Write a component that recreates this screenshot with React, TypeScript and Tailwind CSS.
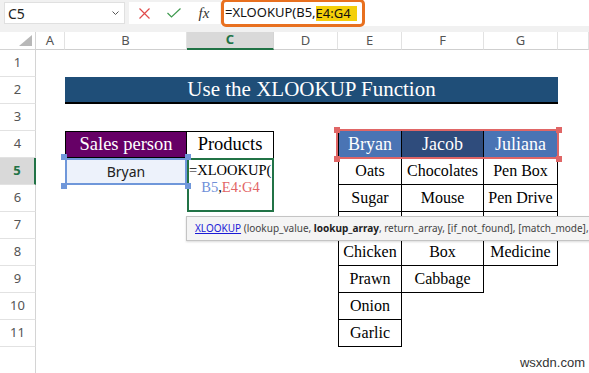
const rs = [
  "row-start-1", "row-start-2", "row-start-3", "row-start-4", "row-start-5", "row-start-6", "row-start-7",
  "row-start-8", "row-start-9", "row-start-10", "row-start-11", "row-start-12", "row-start-13",
];
const cs = ["col-start-1", "col-start-2", "col-start-3", "col-start-4", "col-start-5", "col-start-6", "col-start-7", "col-start-8", "col-start-9"];

const colHeaders = ["A", "B", "C", "D", "E", "F", "G", ""];

// rows 5..11, columns E..G (row 7 sits under the tooltip)
const products: (string | null)[][] = [
  ["Oats", "Chocolates", "Pen Box"],
  ["Sugar", "Mouse", "Pen Drive"],
  ["", "", ""],
  ["Chicken", "Box", "Medicine"],
  ["Prawn", "Cabbage", null],
  ["Onion", null, null],
  ["Garlic", null, null],
];

const serif = "font-['Liberation_Serif',serif]";

function Handles({ color }: { color: string }) {
  return (
    <>
      <div className={`absolute left-[-4px] top-[-4px] h-[6px] w-[6px] ${color}`} />
      <div className={`absolute right-[-4px] top-[-4px] h-[6px] w-[6px] ${color}`} />
      <div className={`absolute bottom-[-4px] left-[-4px] h-[6px] w-[6px] ${color}`} />
      <div className={`absolute bottom-[-4px] right-[-4px] h-[6px] w-[6px] ${color}`} />
    </>
  );
}

export default function App() {
  return (
    <div className="relative h-[373px] w-[589px] overflow-hidden bg-white font-['Noto_Sans',sans-serif] text-[#222]">
      {/* Formula bar */}
      <div className="flex h-[32px] items-start bg-[#f1f1f1]">
        <div className="ml-[4px] mt-[2px] flex h-[22px] w-[121px] items-center justify-between border border-[#e0e0e0] bg-white pl-[3px] pr-[5px] text-[14px]">
          <span>C5</span>
          <svg width="7" height="4" viewBox="0 0 7 4">
            <polyline points="0.5,0.5 3.5,3.5 6.5,0.5" fill="none" stroke="#555" strokeWidth="1" />
          </svg>
        </div>
        <div className="ml-[4px] mt-[2px] flex h-[22px] w-[91px] items-center bg-white">
          <div className="flex w-[30px] justify-center">
            <svg width="11" height="11" viewBox="0 0 11 11">
              <path d="M0.5 0.5 L10.5 10.5 M10.5 0.5 L0.5 10.5" stroke="#e04b4b" strokeWidth="1.2" />
            </svg>
          </div>
          <div className="flex w-[30px] justify-center">
            <svg width="14" height="10" viewBox="0 0 14 10">
              <polyline points="0.5,5 4.5,9 13.5,0.5" fill="none" stroke="#3f9a4f" strokeWidth="1.2" />
            </svg>
          </div>
          <div className={`flex w-[30px] justify-center text-[15px] italic text-[#333] ${serif}`}>fx</div>
        </div>
        <div className="ml-[1px] flex h-[26px] flex-1 items-start bg-white">
          <div className="mt-[-1px] flex h-[28px] w-[144px] items-center rounded-[5px] border-[3px] border-[#e8701f] pl-[1px] text-[13px] text-[#111]">
            =XLOOKUP(B5,<span className="bg-[#f4cf0a] pr-[6px] leading-[15px]">E4:G4</span>
          </div>
        </div>
      </div>

      {/* Sheet */}
      <div className="grid grid-cols-[36px_29px_122px_87px_64px_64px_82px_74px_1fr] grid-rows-[18px_repeat(12,27px)]">
        {/* corner */}
        <div className="col-start-1 row-start-1 flex items-end justify-end border-b border-r border-[#d4d4d4] bg-white pb-[3px] pr-[3px]">
          <svg width="13" height="11" viewBox="0 0 13 11">
            <polygon points="13,0 13,11 0,11" fill="#b8b8b8" />
          </svg>
        </div>
        {colHeaders.map((h, i) =>
          h === "C" ? (
            <div
              key={i}
              className={`${cs[i + 1]} row-start-1 flex items-center justify-center border-b-2 border-r border-b-[#217346] border-r-[#d4d4d4] bg-[#d9d9d9] text-[13px] font-bold text-[#217346]`}
            >
              C
            </div>
          ) : (
            <div
              key={i}
              className={`${cs[i + 1]} row-start-1 flex items-center justify-center border-b border-r border-b-[#cfcfcf] border-r-[#e2e2e2] bg-white text-[13px] text-[#555]`}
            >
              {h}
            </div>
          )
        )}

        {/* row headers */}
        {Array.from({ length: 12 }).map((_, i) =>
          i + 1 === 5 ? (
            <div
              key={i}
              className={`col-start-1 ${rs[i + 1]} flex items-center justify-center border-b border-r-2 border-b-[#e2e2e2] border-r-[#217346] bg-[#d9d9d9] text-[13px] font-bold text-[#217346]`}
            >
              5
            </div>
          ) : (
            <div
              key={i}
              className={`col-start-1 ${rs[i + 1]} flex items-center justify-center border-r border-r-[#d4d4d4] bg-white text-[13px] text-[#555] ${i < 11 ? "border-b border-b-[#e2e2e2]" : ""}`}
            >
              {i < 11 ? i + 1 : ""}
            </div>
          )
        )}

        {/* Title */}
        <div className={`col-start-3 col-span-6 row-start-3 flex items-center justify-center border-b-2 border-black bg-[#1f4e78] text-[21px] text-white ${serif}`}>
          Use the XLOOKUP Function
        </div>

        {/* Left table */}
        <div className={`col-start-3 row-start-5 flex items-center justify-center border border-black bg-[#660066] text-[18.5px] text-white ${serif}`}>
          Sales person
        </div>
        <div className={`col-start-4 row-start-5 flex items-center justify-center border-r border-t border-black bg-white text-[18.5px] text-black ${serif}`}>
          Products
        </div>
        <div className="relative col-start-3 row-start-6 flex items-center justify-center bg-[#edf2fb] text-[14px] text-[#222]">
          Bryan
          <div className="absolute inset-0 border-2 border-[#6f97da]" />
          <Handles color="bg-[#6f97da]" />
        </div>
        <div className={`col-start-4 row-start-6 row-span-2 border-2 border-[#217346] bg-white text-[14.5px] leading-[17px] ${serif}`}>
          <div className="whitespace-nowrap pt-[2px] text-black">=XLOOKUP(</div>
          <div className="text-center">
            <span className="text-[#6f8fd8]">B5</span>
            <span className="text-black">,</span>
            <span className="text-[#e26565]">E4:G4</span>
          </div>
        </div>

        {/* Right table header */}
        <div className={`relative col-start-6 col-span-3 row-start-5 grid grid-cols-subgrid text-[18px] text-white ${serif}`}>
          <div className="flex items-center justify-center border-l border-r border-black bg-[#4a74b4]">Bryan</div>
          <div className="flex items-center justify-center border-r border-black bg-[#2f4c7c]">Jacob</div>
          <div className="flex items-center justify-center border-r border-black bg-[#4a74b4]">Juliana</div>
          <div className="absolute bottom-[-1px] left-[-2px] right-[-1px] top-[-2px] border-2 border-[#e06666]" />
          <Handles color="bg-[#e06666]" />
        </div>

        {/* Right table body */}
        {products.map((row, r) =>
          row.map((item, c) =>
            item === null ? null : (
              <div
                key={`${r}-${c}`}
                className={`${cs[c + 5]} ${rs[r + 5]} flex items-center justify-center border-b border-r border-black bg-white text-[16px] text-black ${serif} ${c === 0 ? "border-l" : ""}`}
              >
                {item}
              </div>
            )
          )
        )}
      </div>

      {/* Function tooltip */}
      <div className="absolute left-[186px] top-[216px] flex h-[25px] w-[420px] items-center whitespace-nowrap border border-[#c4c4c4] bg-[#f4f4f4] pl-[8px] text-[10px] text-[#444] shadow-[0_1px_2px_rgba(0,0,0,0.15)]">
        <span className="text-[#1a1ad6] underline">XLOOKUP</span>
        <span>&nbsp;(lookup_value,&nbsp;</span>
        <span className="font-bold text-[#222]">lookup_array</span>
        <span>, return_array, [if_not_found], [match_mode],</span>
      </div>

      <div className="absolute bottom-[1px] right-[4px] font-['Liberation_Sans',sans-serif] text-[13px] text-[#333]">wsxdn.com</div>
    </div>
  );
}
